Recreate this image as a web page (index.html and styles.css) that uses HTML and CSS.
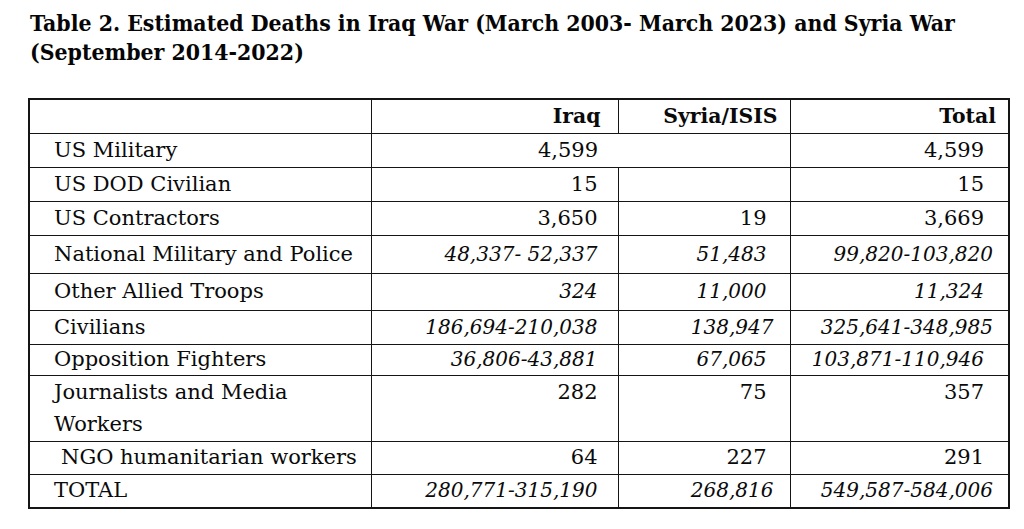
FILE: index.html
```html
<!DOCTYPE html>
<html lang="en">
<head>
<meta charset="utf-8">
<title>Table 2. Estimated Deaths in Iraq War and Syria War</title>
<link rel="stylesheet" href="styles.css">
</head>
<body>
<main class="page">
  <h1 class="title">Table 2. Estimated Deaths in Iraq War (March 2003- March 2023) and Syria War<br>(September 2014-2022)</h1>
  <table class="deaths">
    <colgroup>
      <col class="c-label">
      <col class="c-iraq">
      <col class="c-syria">
      <col class="c-total">
    </colgroup>
    <thead>
      <tr class="r-head">
        <th class="label"></th>
        <th class="iraq">Iraq</th>
        <th class="syria">Syria/ISIS</th>
        <th class="total">Total</th>
      </tr>
    </thead>
    <tbody>
      <tr class="r34">
        <td class="label">US Military</td>
        <td class="iraq open-right">4,599</td>
        <td class="syria open-left"></td>
        <td class="total">4,599</td>
      </tr>
      <tr class="r34">
        <td class="label">US DOD Civilian</td>
        <td class="iraq">15</td>
        <td class="syria"></td>
        <td class="total">15</td>
      </tr>
      <tr class="r34">
        <td class="label">US Contractors</td>
        <td class="iraq">3,650</td>
        <td class="syria">19</td>
        <td class="total">3,669</td>
      </tr>
      <tr class="r38">
        <td class="label">National Military and Police</td>
        <td class="iraq num-i">48,337- 52,337</td>
        <td class="syria num-i">51,483</td>
        <td class="total num-i wide">99,820-103,820</td>
      </tr>
      <tr class="r37">
        <td class="label">Other Allied Troops</td>
        <td class="iraq num-i">324</td>
        <td class="syria num-i">11,000</td>
        <td class="total num-i">11,324</td>
      </tr>
      <tr class="r34">
        <td class="label">Civilians</td>
        <td class="iraq num-i">186,694-210,038</td>
        <td class="syria num-i wide">138,947</td>
        <td class="total num-i wide">325,641-348,985</td>
      </tr>
      <tr class="r31">
        <td class="label">Opposition Fighters</td>
        <td class="iraq num-i">36,806-43,881</td>
        <td class="syria num-i">67,065</td>
        <td class="total num-i">103,871-110,946</td>
      </tr>
      <tr class="r66 top">
        <td class="label two-line">Journalists and Media Workers</td>
        <td class="iraq">282</td>
        <td class="syria">75</td>
        <td class="total">357</td>
      </tr>
      <tr class="r33">
        <td class="label indent">NGO humanitarian workers</td>
        <td class="iraq">64</td>
        <td class="syria">227</td>
        <td class="total">291</td>
      </tr>
      <tr class="r34">
        <td class="label">TOTAL</td>
        <td class="iraq num-i">280,771-315,190</td>
        <td class="syria num-i wide">268,816</td>
        <td class="total num-i wide">549,587-584,006</td>
      </tr>
    </tbody>
  </table>
</main>
</body>
</html>
```
FILE: styles.css
```css
html, body {
  margin: 0;
  padding: 0;
  background: #ffffff;
}

.page {
  padding-top: 9px;
  color: #0a0a0a;
  font-family: "DejaVu Serif", "Liberation Serif", serif;
}

.title {
  margin: 0 0 31px 0;
  padding-left: 30px;
  font-family: "DejaVu Serif Condensed", "DejaVu Serif", serif;
  font-stretch: condensed;
  font-weight: 700;
  font-size: 22.8px;
  line-height: 29px;
  white-space: nowrap;
  color: #050505;
}

.deaths {
  margin-left: 28px;
  width: 980px;
  table-layout: fixed;
  border-collapse: collapse;
  border: 2px solid #151515;
  font-size: 21px;
  line-height: 27px;
}

.c-label { width: 342px; }
.c-iraq  { width: 247px; }
.c-syria { width: 172px; }
.c-total { width: 219px; }

.deaths th,
.deaths td {
  border: 1px solid #151515;
  padding: 0;
  vertical-align: middle;
  white-space: nowrap;
  overflow: visible;
}

.deaths th {
  font-weight: 700;
  font-size: 20.4px;
}

.deaths .label {
  text-align: left;
  padding-left: 24px;
}

.deaths .indent {
  padding-left: 31px;
}

.deaths .iraq  { text-align: right; padding-right: 20px; }
.deaths .syria { text-align: right; padding-right: 23px; }
.deaths .total { text-align: right; padding-right: 24px; }

.deaths th.iraq  { padding-right: 17px; }
.deaths th.syria { padding-right: 12px; }
.deaths th.total { padding-right: 12px; }

.deaths .syria.wide { padding-right: 16px; }
.deaths .total.wide { padding-right: 15px; }

.num-i {
  font-style: italic;
  font-size: 20px;
}

.open-right { border-right-style: hidden !important; }
.open-left  { border-left-style: hidden !important; }

.r-head { height: 34px; }
.r34 { height: 34px; }
.r38 { height: 38px; }
.r37 { height: 37px; }
.r31 { height: 31px; }
.r33 { height: 33px; }
.r66 { height: 66px; }

.top td {
  vertical-align: top;
  line-height: 32px;
  padding-top: 0;
}

.two-line {
  white-space: normal !important;
  padding-right: 70px;
}
```
